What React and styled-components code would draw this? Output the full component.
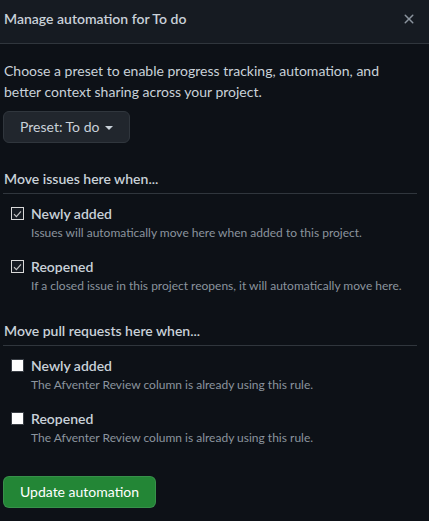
import React from "react"
import styled, { createGlobalStyle } from "styled-components"

const GlobalStyle = createGlobalStyle`
  html, body {
    margin: 0;
    padding: 0;
    background: #0d1117;
  }
  body {
    font-family: Lato, "Liberation Sans", sans-serif;
    color: #c9d1d9;
    -webkit-font-smoothing: antialiased;
  }
`

const Dialog = styled.div`
  width: 429px;
  min-height: 521px;
  background: #0d1117;
`

const Header = styled.div`
  height: 44px;
  display: flex;
  align-items: flex-start;
  justify-content: space-between;
  padding: 8px 12px 0 4px;
  box-sizing: border-box;
  background: #161b22;
  border-bottom: 1px solid #30363d;
`

const Title = styled.h1`
  margin: 0;
  font-size: 14px;
  line-height: 21px;
  font-weight: 600;
  color: #c9d1d9;
`

const CloseButton = styled.button`
  display: flex;
  padding: 0;
  margin-top: 3px;
  border: 0;
  background: none;
  color: #8b949e;
  cursor: pointer;
`

const Body = styled.div`
  padding: 16px 12px 0 3px;
  display: flex;
  flex-direction: column;
  align-items: flex-start;
`

const Intro = styled.p`
  margin: 0 0 9px 1px;
  font-size: 14px;
  line-height: 21px;
  color: #c9d1d9;
`

const Button = styled.button`
  height: 32px;
  padding: 0 16px;
  display: inline-flex;
  align-items: center;
  gap: 6px;
  font-family: inherit;
  font-size: 14px;
  line-height: 20px;
  border-radius: 6px;
  cursor: pointer;
  color: ${(p) => (p.$primary ? "#ffffff" : "#c9d1d9")};
  background: ${(p) => (p.$primary ? "#238636" : "#21262d")};
  border: 1px solid ${(p) => (p.$primary ? "rgba(240, 246, 252, 0.1)" : "#30363d")};
`

const Caret = styled.span`
  width: 0;
  height: 0;
  border-left: 4px solid transparent;
  border-right: 4px solid transparent;
  border-top: 4px solid #c9d1d9;
  margin-top: 1px;
`

const Section = styled.section`
  align-self: stretch;
  margin-top: 25px;
`

const SectionTitle = styled.h2`
  margin: 0;
  padding: 0 0 4px 1px;
  font-size: 14px;
  line-height: 21px;
  font-weight: 600;
  color: #c9d1d9;
  border-bottom: 1px solid #30363d;
`

const RuleList = styled.div`
  display: flex;
  flex-direction: column;
  gap: 14px;
  padding: 9px 0 0 8px;
`

const Rule = styled.label`
  display: grid;
  grid-template-columns: 13px 1fr;
  column-gap: 7px;
  cursor: pointer;
`

const Box = styled.span`
  width: 13px;
  height: 13px;
  margin-top: 4px;
  box-sizing: border-box;
  display: flex;
  align-items: center;
  justify-content: center;
  border: 1px solid ${(p) => (p.$checked ? "#d9d9d9" : "#3a3f46")};
  background: ${(p) => (p.$checked ? "#161b22" : "#ffffff")};
`

const RuleText = styled.span`
  display: flex;
  flex-direction: column;
`

const RuleName = styled.span`
  font-size: 14px;
  line-height: 21px;
  font-weight: 600;
  color: #c9d1d9;
`

const RuleNote = styled.span`
  font-size: 12px;
  line-height: 18px;
  color: #8b949e;
`

const Footer = styled.div`
  margin-top: 29px;
`

const XIcon = () => (
  <svg width="16" height="16" viewBox="0 0 16 16" fill="currentColor">
    <path d="M3.72 3.72a.75.75 0 0 1 1.06 0L8 6.94l3.22-3.22a.749.749 0 0 1 1.275.326.749.749 0 0 1-.215.734L9.06 8l3.22 3.22a.749.749 0 0 1-.326 1.275.749.749 0 0 1-.734-.215L8 9.06l-3.22 3.22a.751.751 0 0 1-1.042-.018.751.751 0 0 1-.018-1.042L6.94 8 3.72 4.78a.75.75 0 0 1 0-1.06Z" />
  </svg>
)

const Check = () => (
  <svg width="9" height="8" viewBox="0 0 9 8">
    <path d="M1 4.2 3.4 6.6 8 1.4" fill="none" stroke="#c4c4c4" strokeWidth="1.2" />
  </svg>
)

const sections = [
  {
    title: "Move issues here when...",
    rules: [
      { name: "Newly added", note: "Issues will automatically move here when added to this project.", checked: true },
      { name: "Reopened", note: "If a closed issue in this project reopens, it will automatically move here.", checked: true },
    ],
  },
  {
    title: "Move pull requests here when...",
    rules: [
      { name: "Newly added", note: "The Afventer Review column is already using this rule.", checked: false },
      { name: "Reopened", note: "The Afventer Review column is already using this rule.", checked: false },
    ],
  },
]

const App = () => (
  <>
    <GlobalStyle />
    <Dialog>
      <Header>
        <Title>Manage automation for To do</Title>
        <CloseButton aria-label="Close">
          <XIcon />
        </CloseButton>
      </Header>
      <Body>
        <Intro>
          Choose a preset to enable progress tracking, automation, and better context sharing across your project.
        </Intro>
        <Button>
          Preset: To do
          <Caret />
        </Button>
        {sections.map((section) => (
          <Section key={section.title}>
            <SectionTitle>{section.title}</SectionTitle>
            <RuleList>
              {section.rules.map((rule) => (
                <Rule key={rule.name}>
                  <Box $checked={rule.checked}>{rule.checked && <Check />}</Box>
                  <RuleText>
                    <RuleName>{rule.name}</RuleName>
                    <RuleNote>{rule.note}</RuleNote>
                  </RuleText>
                </Rule>
              ))}
            </RuleList>
          </Section>
        ))}
        <Footer>
          <Button $primary>Update automation</Button>
        </Footer>
      </Body>
    </Dialog>
  </>
)

export default App
